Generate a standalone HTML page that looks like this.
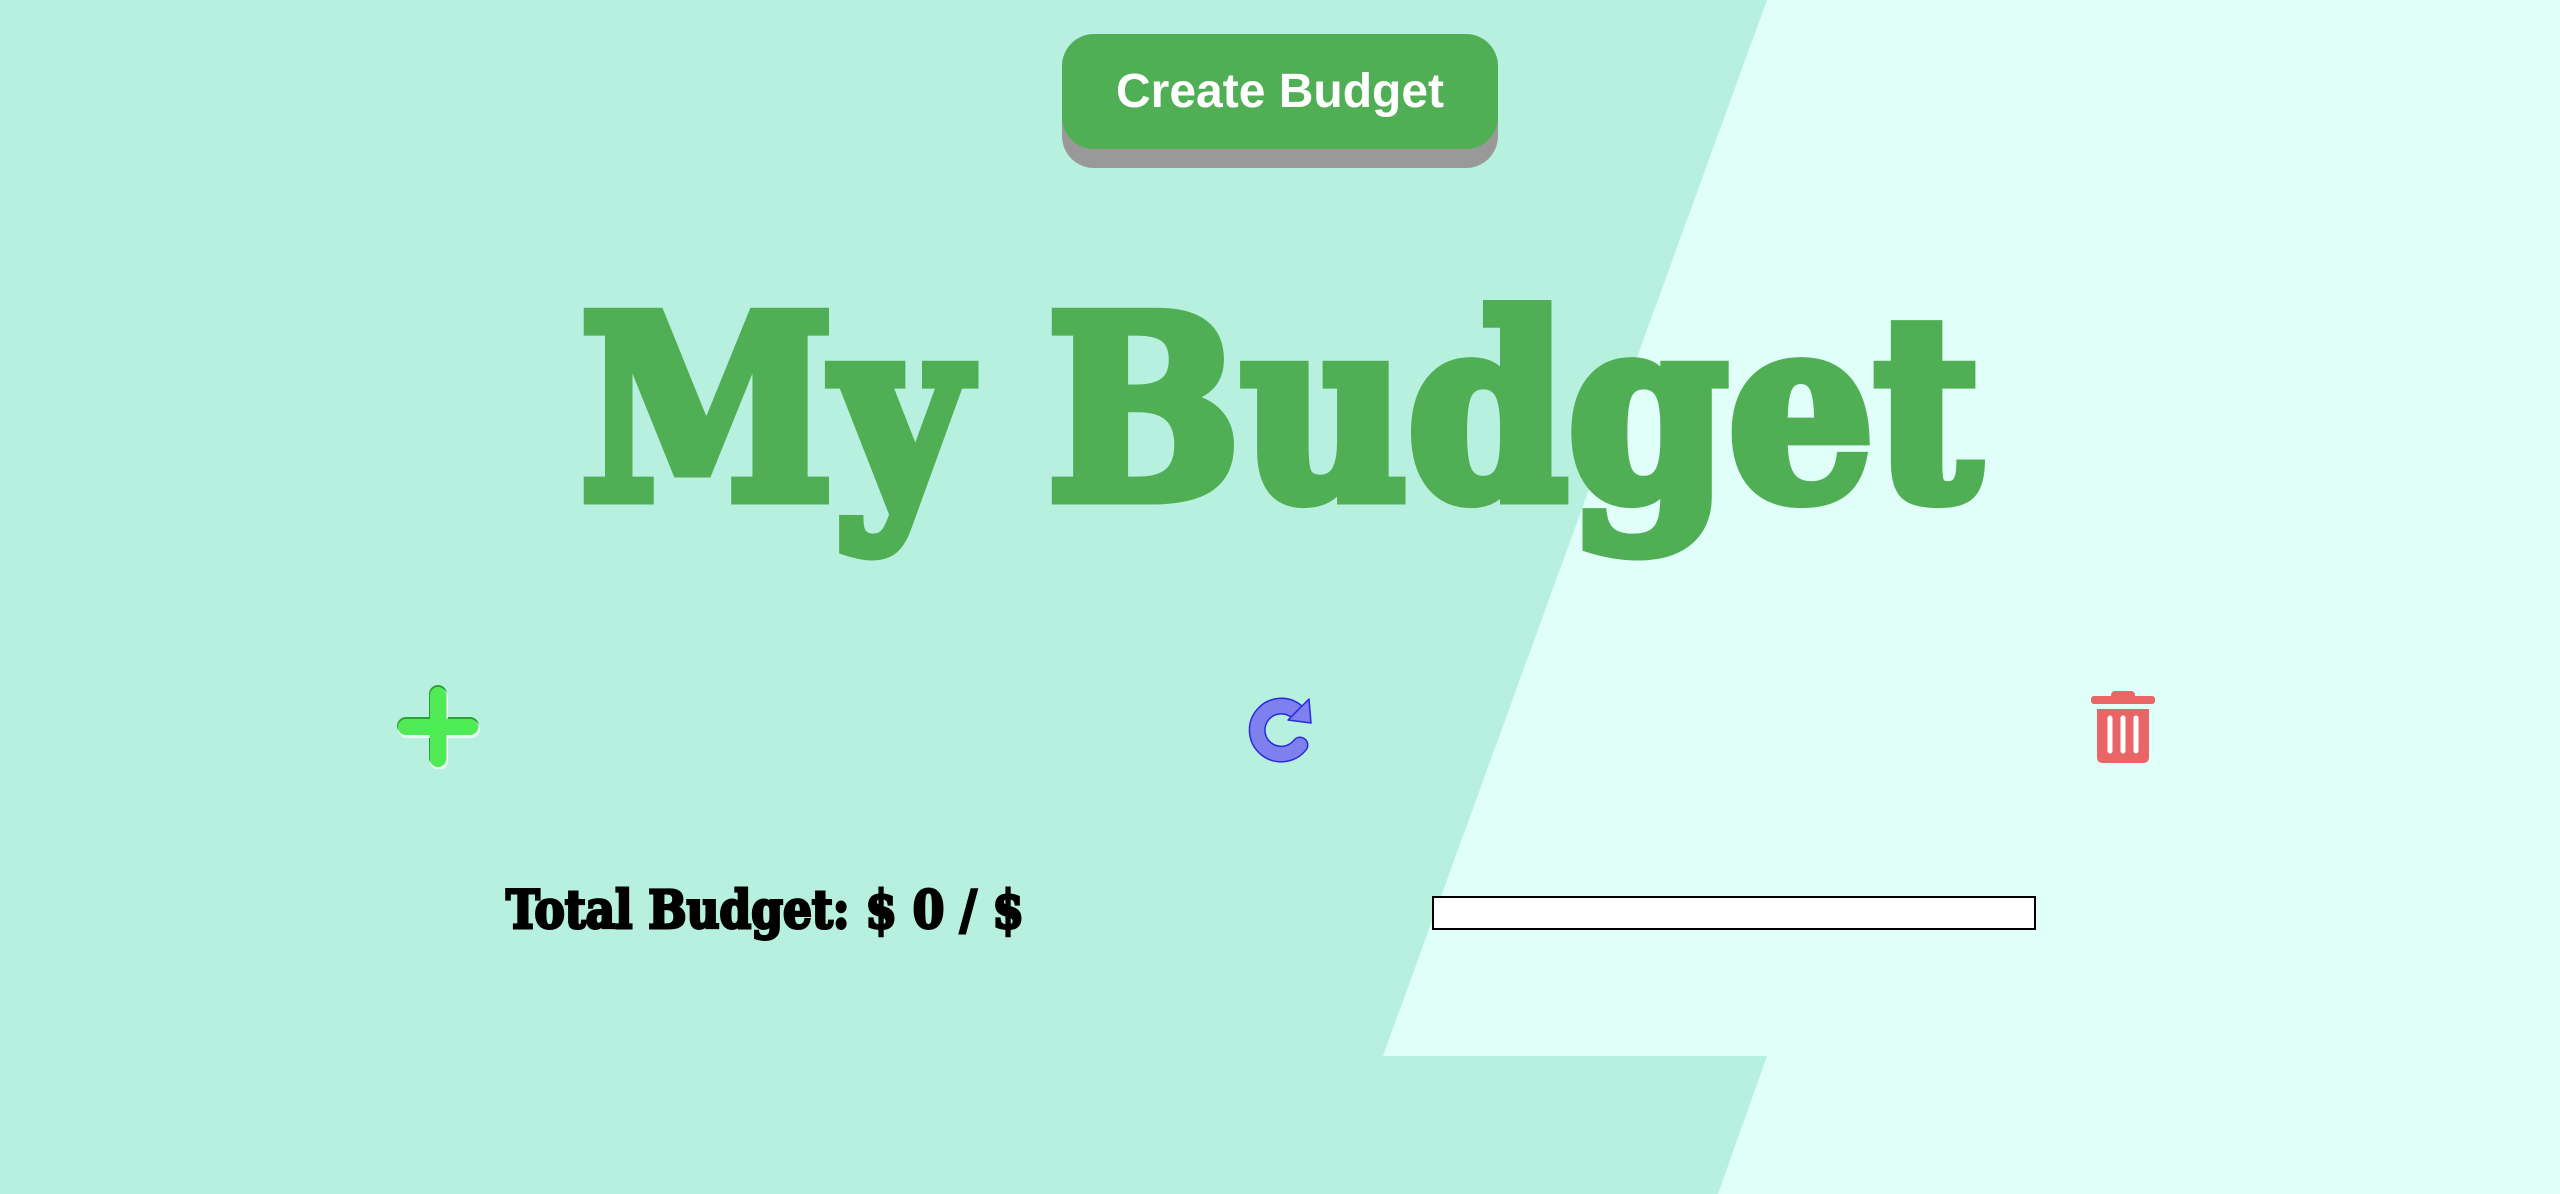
<!DOCTYPE html>
<html><head><meta charset="utf-8"><style>
html,body{margin:0;padding:0}
body{width:2560px;height:1194px;position:relative;overflow:hidden;background:#e0fff8;font-family:"Liberation Sans",sans-serif}
.bg{position:absolute;left:0;top:0}
.btn{position:absolute;left:1062px;top:34px;width:436px;height:115px;background:#50af55;border-radius:32px;box-shadow:0 19px 0 #999;color:#fff;font-weight:bold;font-size:48px;display:flex;align-items:center;justify-content:center}
.title{position:absolute;left:580px;top:284px;font-family:"DejaVu Serif",serif;font-weight:bold;font-size:252px;line-height:252px;color:#50af55;-webkit-text-stroke:13px #50af55;white-space:nowrap;transform-origin:0 0}
.total{position:absolute;left:506px;top:885px;font-family:"DejaVu Serif",serif;font-weight:bold;font-size:52px;line-height:52px;color:#000;-webkit-text-stroke:3px #000;white-space:nowrap;transform-origin:0 0}
.bar{position:absolute;left:1432px;top:896px;width:600px;height:30px;border:2px solid #000;background:#fff}
svg.i{position:absolute}
</style></head><body>
<svg class="bg" width="2560" height="1194"><polygon points="0,0 1767,0 1383,1056 1767,1056 1718,1194 0,1194" fill="#b7f0de"/></svg>
<div class="btn">Create Budget</div>
<div class="title" id="t" data-w="1400">My Budget</div>
<svg class="i" style="left:396px;top:685px" width="84" height="84" viewBox="0 0 84 84">
<path d="M42 10 V74 M10 42 H74" stroke="#2e9e3a" stroke-width="18" stroke-linecap="round" transform="translate(0,-1)"/>
<path d="M42 10 V74 M10 42 H74" stroke="#fff" stroke-width="18" stroke-linecap="round" transform="translate(1,2)" opacity=".7"/>
<path d="M42 10 V74 M10 42 H74" stroke="#4feb55" stroke-width="16" stroke-linecap="round"/>
</svg>
<svg class="i" style="left:1244px;top:692px" width="76" height="76" viewBox="0 0 76 76">
<path d="M56 53 A24 24 0 1 1 53 20" fill="none" stroke="#2a2ad8" stroke-width="17" stroke-linecap="round"/>
<path d="M56 53 A24 24 0 1 1 53 20" fill="none" stroke="#7e80f0" stroke-width="14" stroke-linecap="round"/>
<polygon points="65,7 44,28 67,31" fill="#7e80f0" stroke="#2a2ad8" stroke-width="1.5" stroke-linejoin="round"/>
</svg>
<svg class="i" style="left:2090px;top:688px" width="66" height="78" viewBox="0 0 66 78">
<rect x="21" y="3" width="24" height="8" rx="4" fill="#ea6565"/>
<rect x="1" y="8" width="64" height="8" rx="3" fill="#ea6565"/>
<path d="M7 21 H59 V69 Q59 75 53 75 H13 Q7 75 7 69 Z" fill="#ea6565"/>
<path d="M20 30 V63 M33 30 V63 M46 30 V63" stroke="#fff" stroke-width="5" stroke-linecap="round"/>
</svg>
<div class="total" id="tt" data-w="518">Total Budget: $ 0 / $</div>
<div class="bar"></div>
<script>
["t","tt"].forEach(function(id){var e=document.getElementById(id);var w=e.getBoundingClientRect().width;e.style.transform="scaleX("+(+e.dataset.w/w)+")";});
</script>
</body></html>
